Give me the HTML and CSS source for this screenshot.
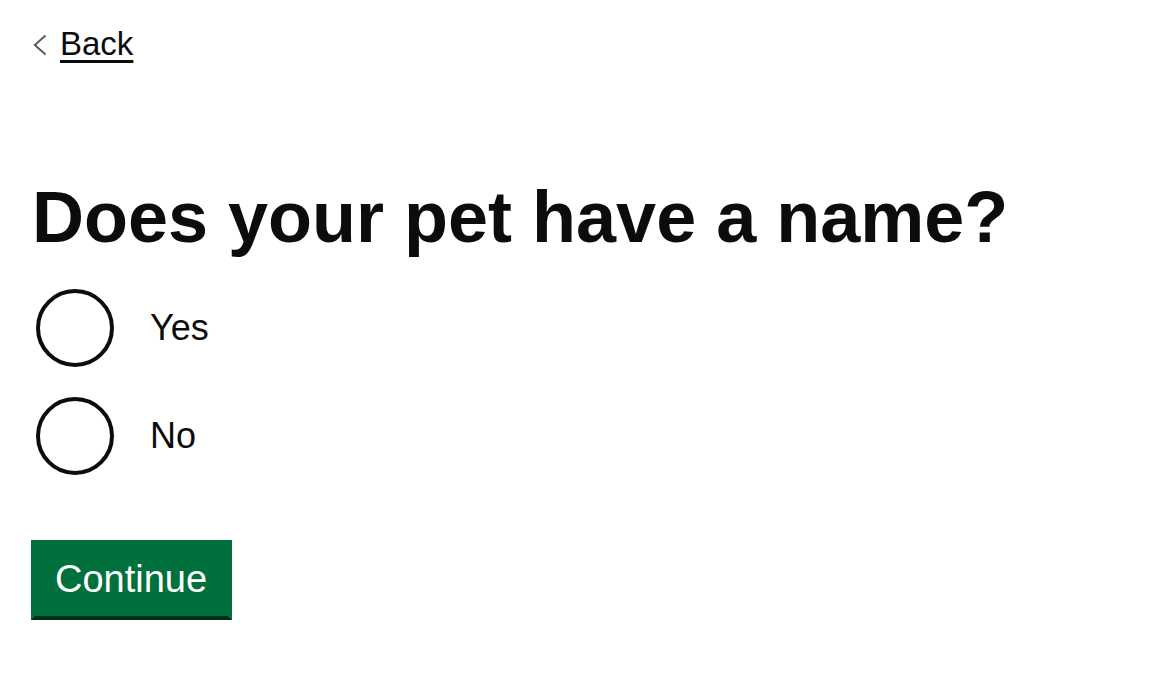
FILE: index.html
```html
<!DOCTYPE html>
<html lang="en">
<head>
<meta charset="utf-8">
<title>Does your pet have a name?</title>
<link rel="stylesheet" href="styles.css">
</head>
<body>
<div class="page">
  <a class="back" href="#">
    <svg class="chev" width="14" height="22" viewBox="0 0 14 22" aria-hidden="true"><path d="M12.5 1.5 L1.8 11 L12.5 20.5" fill="none" stroke="#505a5f" stroke-width="1.9"/></svg>
    <span class="back-text">Back</span>
  </a>
  <h1 class="title">Does your pet have a name?</h1>
  <div class="radios">
    <label class="radio"><span class="circle"></span><span class="label">Yes</span></label>
    <label class="radio"><span class="circle"></span><span class="label">No</span></label>
  </div>
  <button class="button" type="button">Continue</button>
</div>
</body>
</html>
```
FILE: styles.css
```css
html, body {
  margin: 0;
  padding: 0;
  background: #ffffff;
}
body {
  font-family: "Liberation Sans", Arial, Helvetica, sans-serif;
  color: #0b0c0c;
}
.page {
  padding: 0 30px;
  display: flex;
  flex-direction: column;
  align-items: flex-start;
}
.back {
  margin-top: 24px;
  display: inline-flex;
  align-items: center;
  color: #0b0c0c;
  text-decoration: none;
  font-size: 33px;
  line-height: 40px;
}
.chev {
  margin-left: 3px;
  margin-right: 13px;
  margin-top: 2px;
}
.back-text {
  text-decoration: underline;
  text-decoration-thickness: 3px;
  text-underline-offset: 5px;
}
.title {
  margin: 117px 0 0 2px;
  font-size: 72px;
  line-height: 72px;
  font-weight: 700;
  color: #0b0c0c;
}
.radios {
  margin-top: 36px;
  display: flex;
  flex-direction: column;
  gap: 30px;
}
.radio {
  display: flex;
  align-items: center;
  margin-left: 6px;
}
.circle {
  box-sizing: border-box;
  width: 78px;
  height: 78px;
  border: 4px solid #0b0c0c;
  border-radius: 50%;
  flex: none;
}
.label {
  margin-left: 36px;
  font-size: 36px;
  line-height: 40px;
  color: #0b0c0c;
}
.button {
  -webkit-appearance: none;
  appearance: none;
  margin-top: 65px;
  margin-left: 1px;
  box-sizing: border-box;
  font-family: "Liberation Sans", Arial, Helvetica, sans-serif;
  font-size: 38px;
  line-height: 38px;
  color: #ffffff;
  background: #00703c;
  border: 4px solid #00703c;
  border-bottom: 4px solid #002d18;
  border-radius: 0;
  padding: 16px 21px 18px 20px;
  cursor: pointer;
}
```
